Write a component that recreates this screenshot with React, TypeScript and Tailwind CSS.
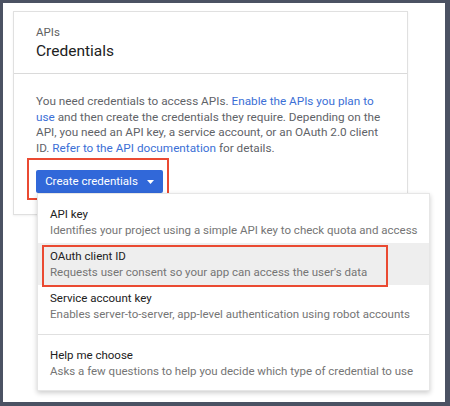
import React from "react";

const items = [
  {
    title: "API key",
    desc: "Identifies your project using a simple API key to check quota and access",
  },
  {
    title: "OAuth client ID",
    desc: "Requests user consent so your app can access the user's data",
    active: true,
  },
  {
    title: "Service account key",
    desc: "Enables server-to-server, app-level authentication using robot accounts",
  },
];

function MenuItem({ title, desc, active }: { title: string; desc: string; active?: boolean }) {
  return (
    <div className={`h-[42px] px-3 pt-[5px] ${active ? "bg-[#eeeeee]" : ""}`}>
      <div className="text-[11.5px] leading-4 text-[#212121]">{title}</div>
      <div className="text-[11.5px] leading-4 text-[#757575] whitespace-nowrap">{desc}</div>
    </div>
  );
}

export default function App() {
  return (
    <div
      className="relative w-[450px] h-[406px] overflow-hidden bg-white border-t-[3px] border-l-[3px] border-r-[5px] border-b-[4px] border-[#4b5263]"
      style={{ fontFamily: "Roboto, 'Liberation Sans', sans-serif" }}
    >
      <div className="ml-[10px] mt-[8px] w-[395px] h-[204px] border border-[#e0e0e0] shadow-[0_1px_2px_rgba(0,0,0,0.06)]">
        <div className="h-[62px] px-[22px] pt-[13px] border-b border-[#dadada]">
          <div className="text-[11.5px] leading-[14px] text-[#616161]">APIs</div>
          <div className="text-[15.5px] leading-6 text-[#212121]">Credentials</div>
        </div>
        <div className="px-[22px] pt-[20px]">
          <p className="text-[11.75px] leading-[15.5px] text-[#5f6368] whitespace-nowrap">
            You need credentials to access APIs.{" "}
            <span className="text-[#3b6fd6]">Enable the APIs you plan to</span>
            <br />
            <span className="text-[#3b6fd6]">use</span> and then create the credentials they require. Depending on the
            <br />
            API, you need an API key, a service account, or an OAuth 2.0 client
            <br />
            ID. <span className="text-[#3b6fd6]">Refer to the API documentation</span> for details.
          </p>
          <div className="mt-[2px] ml-[-9px] w-[142px] h-[42px] border-2 border-[#ea4a32] pt-[10px] pl-[7px]">
            <button className="flex h-[23px] w-[127px] items-center justify-center gap-[9px] rounded-[2px] bg-[#3168d9] text-[11.5px] text-white">
              Create credentials
              <svg width="7" height="4" viewBox="0 0 7 4">
                <path d="M0 0h7L3.5 4z" fill="white" />
              </svg>
            </button>
          </div>
        </div>
      </div>

      <div className="absolute left-[34px] top-[190px] w-[393px] h-[198px] bg-white border border-[#e6e6e6] shadow-[0_2px_5px_rgba(0,0,0,0.2)] pt-[7px]">
        {items.map((it) => (
          <MenuItem key={it.title} {...it} />
        ))}
        <div className="mt-[7px] border-t border-[#e0e0e0]" />
        <div className="pt-[7px]">
          <MenuItem
            title="Help me choose"
            desc="Asks a few questions to help you decide which type of credential to use"
          />
        </div>
        <div className="absolute left-[4px] top-[51px] w-[346px] h-[42px] border-2 border-[#ea4a32]" />
      </div>
    </div>
  );
}
